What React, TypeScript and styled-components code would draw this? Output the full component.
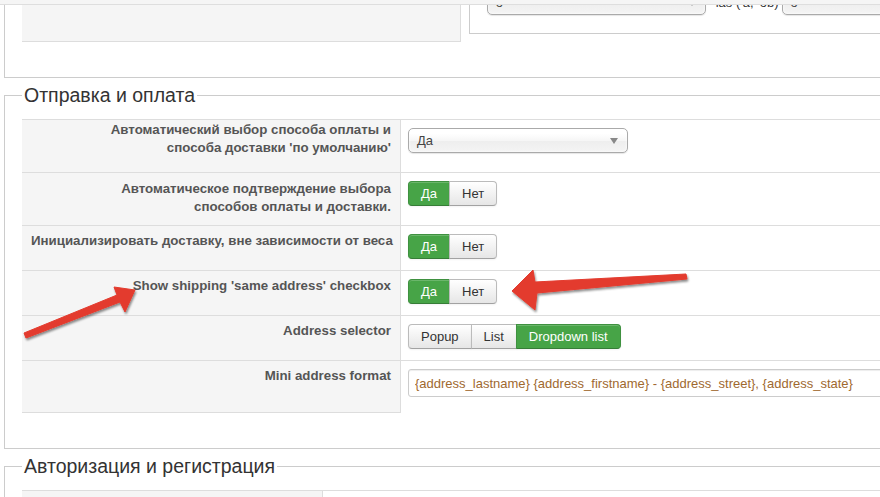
import React from 'react';
import styled, { createGlobalStyle } from 'styled-components';

const GlobalStyle = createGlobalStyle`
    html, body {
        margin: 0;
        padding: 0;
        overflow: hidden;
        background: #fff;
    }
    body {
        font-family: "Liberation Sans", Arial, sans-serif;
        font-size: 13px;
        color: #333;
    }
`;

type Option = { label: string; active?: boolean };

type Setting = {
    lines: string[];
    kind: 'select' | 'toggle' | 'input';
    value?: string;
    options?: Option[];
    labelPad?: [number, number];
};

const yesNo: Option[] = [{ label: 'Да', active: true }, { label: 'Нет' }];

const settings: Setting[] = [
    {
        lines: ['Автоматический выбор способа оплаты и', "способа доставки 'по умолчанию'"],
        kind: 'select',
        value: 'Да',
        labelPad: [1, 15],
    },
    {
        lines: ['Автоматическое подтверждение выбора', 'способов оплаты и доставки.'],
        kind: 'toggle',
        options: yesNo,
        labelPad: [7, 9],
    },
    { lines: ['Инициализировать доставку, вне зависимости от веса'], kind: 'toggle', options: yesNo },
    { lines: ["Show shipping 'same address' checkbox"], kind: 'toggle', options: yesNo },
    {
        lines: ['Address selector'],
        kind: 'toggle',
        options: [{ label: 'Popup' }, { label: 'List' }, { label: 'Dropdown list', active: true }],
    },
    {
        lines: ['Mini address format'],
        kind: 'input',
        value: '{address_lastname} {address_firstname} - {address_street}, {address_state}',
    },
];

const App = () => {
    return (
        <Page>
            <GlobalStyle />
            <TopStrip />
            <Content>
                <TopFieldset>
                    <TopLabel />
                    <TopValue>
                        <TopBox>
                            <MiniSelect $width={219}>
                                <span>о</span>
                                <Caret />
                            </MiniSelect>
                            <AliasText>ias ('a, 'ob)</AliasText>
                            <MiniSelect $width={160}>
                                <span>о</span>
                            </MiniSelect>
                        </TopBox>
                    </TopValue>
                </TopFieldset>

                <Fieldset $bottom={35}>
                    <Legend>Отправка и оплата</Legend>
                    <Table>
                        {settings.map((s, i) => (
                            <Row key={i} $labelWidth={379}>
                                <LabelCell
                                    $pt={s.labelPad ? s.labelPad[0] : 6}
                                    $pb={s.labelPad ? s.labelPad[1] : 10}
                                    $last={i === settings.length - 1}
                                >
                                    {s.lines.map((line, j) => (
                                        <React.Fragment key={j}>
                                            {j > 0 && <br />}
                                            {line}
                                        </React.Fragment>
                                    ))}
                                </LabelCell>
                                <ValueCell>
                                    {s.kind === 'select' && (
                                        <Select>
                                            <span>{s.value}</span>
                                            <Caret />
                                        </Select>
                                    )}
                                    {s.kind === 'toggle' && (
                                        <ButtonGroup>
                                            {s.options!.map((o) => (
                                                <ToggleButton key={o.label} $active={!!o.active}>
                                                    {o.label}
                                                </ToggleButton>
                                            ))}
                                        </ButtonGroup>
                                    )}
                                    {s.kind === 'input' && <TextInput readOnly value={s.value} />}
                                </ValueCell>
                            </Row>
                        ))}
                    </Table>
                </Fieldset>

                <Fieldset $bottom={0}>
                    <Legend>Авторизация и регистрация</Legend>
                    <Table>
                        <Row $labelWidth={301}>
                            <LabelCell $pt={6} $pb={10} $last={false}>&nbsp;</LabelCell>
                            <ValueCell />
                        </Row>
                    </Table>
                </Fieldset>
            </Content>

            <Arrows width="900" height="497" viewBox="0 0 900 497">
                <defs>
                    <filter id="arrowShadow" x="-10%" y="-20%" width="130%" height="160%">
                        <feDropShadow dx="1" dy="2" stdDeviation="1.2" floodColor="#000" floodOpacity="0.45" />
                    </filter>
                </defs>
                <polygon
                    filter="url(#arrowShadow)"
                    fill="#e33b2e"
                    strokeLinejoin="round"
                    stroke="#e33b2e"
                    strokeWidth="1"
                    points="135,290 114,287 117,295 24,333 26,338 120,302 125,312"
                />
                <polygon
                    filter="url(#arrowShadow)"
                    fill="#e33b2e"
                    strokeLinejoin="round"
                    stroke="#e33b2e"
                    strokeWidth="1"
                    points="512,291 533,270 535,282 686,274 687,279 537,293 535,310"
                />
            </Arrows>
        </Page>
    );
};

export default App;

const Page = styled.div`
    position: relative;
    width: 900px;
    height: 497px;
    overflow: hidden;
`;

const TopStrip = styled.div`
    height: 4px;
    background: #f5f5f5;
    border-bottom: 1px solid #dedede;
    position: relative;
    z-index: 1;
`;

const Content = styled.div`
    padding-left: 4px;
`;

const TopFieldset = styled.div`
    display: flex;
    height: 72px;
    padding-left: 17px;
    border-left: 1px solid #ccc;
    border-bottom: 1px solid #ccc;
`;

const TopLabel = styled.div`
    width: 440px;
    height: 36px;
    background: #f5f5f5;
    border-right: 1px solid #ddd;
    border-bottom: 1px solid #ddd;
`;

const TopValue = styled.div`
    flex: 1;
    padding-left: 8px;
`;

const TopBox = styled.div`
    display: flex;
    align-items: flex-start;
    height: 28px;
    padding-left: 17px;
    border-left: 1px solid #ccc;
    border-bottom: 1px solid #ccc;
    overflow: hidden;
`;

const Select = styled.div`
    box-sizing: border-box;
    display: flex;
    align-items: center;
    justify-content: space-between;
    width: 220px;
    height: 25px;
    padding: 0 9px 0 8px;
    border: 1px solid #aaa;
    border-radius: 5px;
    background: linear-gradient(#fff 20%, #f6f6f6 50%, #eee 52%, #f4f4f4 100%);
    box-shadow: inset 0 0 3px #fff, 0 1px 1px rgba(0, 0, 0, 0.1);
    color: #444;
    font-size: 13px;
`;

const MiniSelect = styled(Select)<{ $width: number }>`
    flex: none;
    width: ${(p) => p.$width}px;
    margin-top: -15px;
`;

const Caret = styled.i`
    width: 0;
    height: 0;
    border-left: 4px solid transparent;
    border-right: 4px solid transparent;
    border-top: 6px solid #888;
`;

const AliasText = styled.span`
    flex: none;
    height: 25px;
    line-height: 25px;
    margin: -15px 3px 0 10px;
    font-size: 13px;
    color: #333;
`;

const Fieldset = styled.fieldset<{ $bottom: number }>`
    margin: 5px 0 0;
    padding: 12px 0 ${(p) => p.$bottom}px 17px;
    min-width: 0;
    border: 1px solid #ccc;
    border-right: none;
`;

const Legend = styled.legend`
    padding: 0 2px;
    margin: 0;
    font-size: 19.5px;
    line-height: 24px;
    color: #333;
`;

const Table = styled.div`
    display: flex;
    flex-direction: column;
`;

const Row = styled.div<{ $labelWidth: number }>`
    display: grid;
    grid-template-columns: ${(p) => p.$labelWidth}px 1fr;
    border-top: 1px solid #ddd;
`;

const LabelCell = styled.div<{ $pt: number; $pb: number; $last: boolean }>`
    box-sizing: border-box;
    padding: ${(p) => p.$pt}px 9px ${(p) => p.$pb}px;
    background: #f5f5f5;
    border-right: 1px solid #ddd;
    border-bottom: ${(p) => (p.$last ? '1px solid #ddd' : 'none')};
    text-align: right;
    white-space: nowrap;
    font-size: 13.3px;
    font-weight: bold;
    line-height: 18px;
    color: #555;
`;

const ValueCell = styled.div`
    display: flex;
    align-items: flex-start;
    padding: 8px 8px 11px 7px;
    min-height: 25px;
`;

const ButtonGroup = styled.div`
    display: inline-flex;
`;

const ToggleButton = styled.div<{ $active: boolean }>`
    box-sizing: border-box;
    height: 25px;
    line-height: 23px;
    padding: 0 12px;
    font-size: 13px;
    border: 1px solid ${(p) => (p.$active ? '#3f9140' : '#bbb')};
    border-bottom-color: ${(p) => (p.$active ? '#367d37' : '#a2a2a2')};
    background: ${(p) => (p.$active ? '#47a447' : 'linear-gradient(#fff, #e6e6e6)')};
    color: ${(p) => (p.$active ? '#fff' : '#333')};
    box-shadow: inset 0 1px 0 rgba(255, 255, 255, 0.2), 0 1px 2px rgba(0, 0, 0, 0.05);

    & + & {
        margin-left: -1px;
    }
    &:first-child {
        border-radius: 4px 0 0 4px;
    }
    &:last-child {
        border-radius: 0 4px 4px 0;
    }
`;

const TextInput = styled.input`
    box-sizing: border-box;
    width: 520px;
    height: 28px;
    margin-bottom: 5px;
    padding: 0 6px;
    border: 1px solid #ccc;
    border-radius: 3px;
    box-shadow: inset 0 1px 1px rgba(0, 0, 0, 0.075);
    font-family: "Liberation Sans", Arial, sans-serif;
    font-size: 13px;
    color: #a0692f;
    outline: none;
`;

const Arrows = styled.svg`
    position: absolute;
    left: 0;
    top: 0;
    pointer-events: none;
`;
